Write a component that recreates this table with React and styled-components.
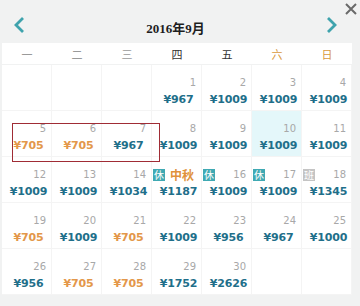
import styled, { createGlobalStyle } from 'styled-components'

const GlobalStyle = createGlobalStyle`
  html, body {
    margin: 0;
    padding: 0;
    background: #f1f2f2;
  }
`

const Page = styled.div`
  position: relative;
  width: 360px;
  height: 306px;
  background: #f1f2f2;
  overflow: hidden;
  font-family: 'DejaVu Sans', 'Noto Sans CJK SC', sans-serif;
`

const Header = styled.div`
  display: flex;
  align-items: center;
  justify-content: space-between;
  height: 43px;
  padding: 6px 22px 0 13px;
  box-sizing: border-box;
`

const Title = styled.div`
  font-family: 'Liberation Serif', 'Noto Sans CJK SC', serif;
  font-weight: bold;
  font-size: 13px;
  color: #1e1e1e;
  margin-top: 5px;
`

const NavButton = styled.svg`
  width: 12px;
  height: 18px;
  display: block;
`

const Close = styled.svg`
  position: absolute;
  top: 2px;
  right: 2px;
  width: 14px;
  height: 14px;
`

const WeekRow = styled.div`
  display: grid;
  grid-template-columns: repeat(7, 50px);
  height: 21px;
  margin-left: 2px;
  width: 350px;
  background: #fff;
  align-items: center;
`

const WeekDay = styled.div`
  text-align: center;
  font-family: 'Noto Sans CJK SC', sans-serif;
  font-size: 11px;
  color: ${({ tone }) =>
    tone === 'weekend' ? '#d99a3c' : tone === 'dark' ? '#333' : '#9a9a9a'};
`

const Grid = styled.div`
  display: grid;
  grid-template-columns: repeat(7, 50px);
  grid-auto-rows: 46px;
  margin-left: 2px;
  margin-top: 1px;
  width: 350px;
  background: #fff;
`

const Cell = styled.div`
  display: flex;
  flex-direction: column;
  box-sizing: border-box;
  padding-top: 11px;
  border-right: 1px solid #f4f4f4;
  border-bottom: 1px solid #f4f4f4;
  background: ${({ selected }) => (selected ? '#e4f7fa' : '#fff')};
`

const TopLine = styled.div`
  display: flex;
  align-items: center;
  justify-content: space-between;
  height: 13px;
  padding: 0 5px 0 1px;
`

const DayNum = styled.span`
  margin-left: auto;
  font-size: 10px;
  color: #a8a8a8;
`

const Badge = styled.span`
  display: inline-flex;
  align-items: center;
  justify-content: center;
  width: 12px;
  height: 12px;
  font-family: 'Noto Sans CJK SC', sans-serif;
  font-size: 10px;
  line-height: 1;
  color: #fff;
  background: ${({ kind }) => (kind === 'work' ? '#c4c4c4' : '#3fa9b3')};
`

const Festival = styled.span`
  margin-left: 5px;
  margin-right: auto;
  font-family: 'Noto Sans CJK SC', sans-serif;
  font-weight: bold;
  font-size: 12px;
  color: #e0913a;
`

const Price = styled.div`
  margin-top: 4px;
  padding-left: 4px;
  text-align: center;
  font-weight: bold;
  font-size: 11px;
  letter-spacing: -0.2px;
  color: ${({ cheap }) => (cheap ? '#e3974a' : '#1f6f8a')};
`

const Mark = styled.div`
  position: absolute;
  left: 12px;
  top: 123px;
  width: 148px;
  height: 39px;
  box-sizing: border-box;
  border: 1.5px solid #a02c35;
`

const weekdays = [
  ['一', 'light'],
  ['二', 'light'],
  ['三', 'light'],
  ['四', 'dark'],
  ['五', 'dark'],
  ['六', 'weekend'],
  ['日', 'weekend'],
]

const prices = {
  1: 967, 2: 1009, 3: 1009, 4: 1009,
  5: 705, 6: 705, 7: 967, 8: 1009, 9: 1009, 10: 1009, 11: 1009,
  12: 1009, 13: 1009, 14: 1034, 15: 1187, 16: 1009, 17: 1009, 18: 1345,
  19: 705, 20: 1009, 21: 705, 22: 1009, 23: 956, 24: 967, 25: 1000,
  26: 956, 27: 705, 28: 705, 29: 1752, 30: 2626,
}

const badges = { 15: 'off', 16: 'off', 17: 'off', 18: 'work' }

export default function App() {
  const cells = []
  for (let i = 0; i < 3; i++) cells.push(<Cell key={`b${i}`} />)
  for (let d = 1; d <= 30; d++) {
    const badge = badges[d]
    cells.push(
      <Cell key={d} selected={d === 10}>
        <TopLine>
          {badge && <Badge kind={badge}>{badge === 'work' ? '班' : '休'}</Badge>}
          {d === 15 ? <Festival>中秋</Festival> : <DayNum>{d}</DayNum>}
        </TopLine>
        <Price cheap={prices[d] === 705}>¥{prices[d]}</Price>
      </Cell>
    )
  }
  for (let i = 0; i < 2; i++) cells.push(<Cell key={`a${i}`} />)

  return (
    <>
      <GlobalStyle />
      <Page>
        <Header>
          <NavButton viewBox="0 0 12 18">
            <polyline points="10,2 3,9 10,16" fill="none" stroke="#3fa3ad" strokeWidth="2.8" />
          </NavButton>
          <Title>2016年9月</Title>
          <NavButton viewBox="0 0 12 18">
            <polyline points="2,2 9,9 2,16" fill="none" stroke="#3fa3ad" strokeWidth="2.8" />
          </NavButton>
        </Header>
        <Close viewBox="0 0 14 14">
          <path d="M2 2 L12 12 M12 2 L2 12" stroke="#6a6a6a" strokeWidth="2" />
        </Close>
        <WeekRow>
          {weekdays.map(([w, tone]) => (
            <WeekDay key={w} tone={tone}>{w}</WeekDay>
          ))}
        </WeekRow>
        <Grid>{cells}</Grid>
        <Mark />
      </Page>
    </>
  )
}
